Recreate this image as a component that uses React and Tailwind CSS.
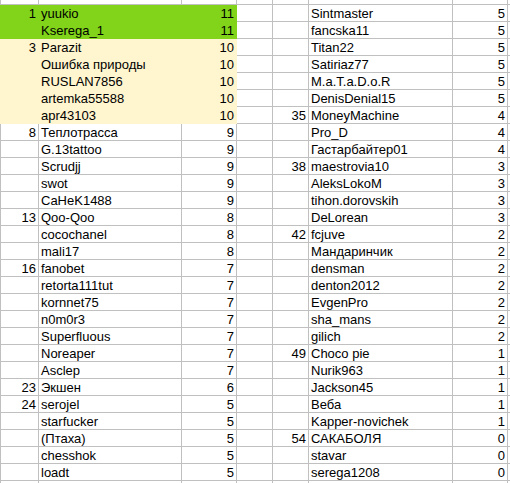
import React from "react";

const left = [
  ["1", "yuukio", "11", "g"],
  ["", "Kserega_1", "11", "g"],
  ["3", "Parazit", "10", "y"],
  ["", "Ошибка природы", "10", "y"],
  ["", "RUSLAN7856", "10", "y"],
  ["", "artemka55588", "10", "y"],
  ["", "apr43103", "10", "y"],
  ["8", "Теплотрасса", "9"],
  ["", "G.13tattoo", "9"],
  ["", "Scrudjj", "9"],
  ["", "swot", "9"],
  ["", "CaHeK1488", "9"],
  ["13", "Qoo-Qoo", "8"],
  ["", "cocochanel", "8"],
  ["", "mali17", "8"],
  ["16", "fanobet", "7"],
  ["", "retorta111tut", "7"],
  ["", "kornnet75", "7"],
  ["", "n0m0r3", "7"],
  ["", "Superfluous", "7"],
  ["", "Noreaper", "7"],
  ["", "Asclep", "7"],
  ["23", "Экшен", "6"],
  ["24", "serojel", "5"],
  ["", "starfucker", "5"],
  ["", "(Птаха)", "5"],
  ["", "chesshok", "5"],
  ["", "loadt", "5"],
];

const right = [
  ["", "Sintmaster", "5"],
  ["", "fancska11", "5"],
  ["", "Titan22", "5"],
  ["", "Satiriaz77", "5"],
  ["", "M.a.T.a.D.o.R", "5"],
  ["", "DenisDenial15", "5"],
  ["35", "MoneyMachine", "4"],
  ["", "Pro_D", "4"],
  ["", "Гастарбайтер01", "4"],
  ["38", "maestrovia10", "3"],
  ["", "AleksLokoM", "3"],
  ["", "tihon.dorovskih", "3"],
  ["", "DeLorean", "3"],
  ["42", "fcjuve", "2"],
  ["", "Мандаринчик", "2"],
  ["", "densman", "2"],
  ["", "denton2012", "2"],
  ["", "EvgenPro", "2"],
  ["", "sha_mans", "2"],
  ["", "gilich", "2"],
  ["49", "Choco pie", "1"],
  ["", "Nurik963", "1"],
  ["", "Jackson45", "1"],
  ["", "Веба", "1"],
  ["", "Kapper-novichek", "1"],
  ["54", "САКАБОЛЯ", "0"],
  ["", "stavar", "0"],
  ["", "serega1208", "0"],
];

function fillClass(fill) {
  if (fill === "g") return "bg-[#81d41a] border-[#81d41a]";
  if (fill === "y") return "bg-[#fff5ce] border-[#fff5ce]";
  return "bg-white border-[#c0c0c0]";
}

function Cell({ w, fill, right, children, h, pad = true }) {
  return (
    <div
      className={[
        "shrink-0 border-r border-b whitespace-nowrap leading-[17px]",
        pad ? "px-[2px]" : "px-0",
        h || "h-[17px]",
        w,
        fillClass(fill),
        right ? "text-right" : "text-left",
      ].join(" ")}
    >
      {children}
    </div>
  );
}

function Row({ l, r, h }) {
  const f = l ? l[3] : undefined;
  return (
    <div className="flex">
      <Cell w="w-[1px]" pad={false} fill={f} h={h} />
      <Cell w="w-[38px]" fill={f} right h={h}>{l && l[0]}</Cell>
      <Cell w="w-[143px]" fill={f} h={h}>{l && l[1]}</Cell>
      <Cell w="w-[55px]" fill={f} right h={h}>{l && l[2]}</Cell>
      <Cell w="w-[36px]" h={h} />
      <Cell w="w-[36px]" right h={h}>{r && r[0]}</Cell>
      <Cell w="w-[144px]" h={h}>{r && r[1]}</Cell>
      <Cell w="w-[55px]" right h={h}>{r && r[2]}</Cell>
      <Cell w="w-[20px]" h={h} />
    </div>
  );
}

export default function App() {
  return (
    <div className="w-[510px] h-[483px] overflow-hidden bg-white text-black font-['Liberation_Sans',Arial,sans-serif] text-[13px]">
      <Row h="h-[5px]" />
      {left.map((l, i) => (
        <Row key={i} l={l} r={right[i]} />
      ))}
      <Row />
    </div>
  );
}
